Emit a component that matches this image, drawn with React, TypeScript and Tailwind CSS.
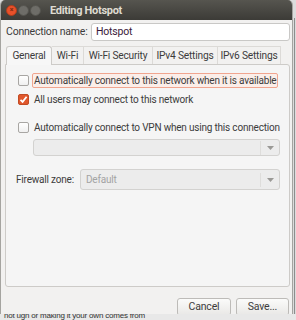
import React from 'react';

const font = { fontFamily: 'Roboto, "Liberation Sans", sans-serif' };

const Check = ({ checked }: { checked?: boolean }) =>
  checked ? (
    <div className="w-[11px] h-[11px] shrink-0 rounded-[2px] bg-[#e0572c] border border-[#c24b24] flex items-center justify-center">
      <svg width="9" height="9" viewBox="0 0 9 9">
        <path d="M1.5 4.8 L3.6 6.8 L7.6 1.8" stroke="white" strokeWidth="1.8" fill="none" />
      </svg>
    </div>
  ) : (
    <div className="w-[11px] h-[11px] shrink-0 rounded-[2px] bg-gradient-to-b from-white to-[#f0f0f0] border border-[#a8a6a3]" />
  );

const Arrow = () => (
  <div className="h-[14px] border-l border-[#dedddb] pl-[6px] pr-[5px] flex items-center">
    <svg width="7" height="4" viewBox="0 0 7 4">
      <path d="M0 0 L7 0 L3.5 4 Z" fill="#9a9996" />
    </svg>
  </div>
);

const Tab = ({ label, w }: { label: string; w: string }) => (
  <div className={`${w} border-t border-r border-[#dcdad7] flex items-center justify-center whitespace-nowrap`}>{label}</div>
);

export default function App() {
  return (
    <div className="w-[296px] h-[320px] bg-[#dcdcdc] overflow-hidden relative tracking-[-0.2px]" style={font}>
      <div className="absolute left-[294px] top-[18px] w-[1px] h-[302px] bg-[#8d8d8d]" />
      <div className="absolute left-0 top-[200px] w-[1px] h-[12px] bg-[#3b6fb0]" />
      <div className="absolute left-0 top-0 w-[293px] h-[314px] bg-[#f2f1f0] rounded-t-[5px] border-l border-r border-[#a5a4a0] flex flex-col overflow-hidden">
        {/* title bar */}
        <div className="h-[20px] bg-gradient-to-b from-[#56554f] to-[#3c3b37] flex items-center pl-[5px] shrink-0">
          <div className="w-[11px] h-[11px] rounded-full bg-[#e9512a] border border-[#b03d1d] flex items-center justify-center text-[7px] leading-none text-[#7a2a12] font-bold">×</div>
          <div className="w-[11px] h-[11px] rounded-full bg-[#6e6d68] border border-[#55544f] ml-[1px]" />
          <div className="w-[11px] h-[11px] rounded-full bg-[#6e6d68] border border-[#55544f] ml-[1px]" />
          <span className="ml-[9px] text-[11px] font-bold text-[#dfdbd2] leading-none whitespace-nowrap tracking-[-0.3px]">Editing Hotspot</span>
        </div>

        <div className="flex-1 flex flex-col pl-[4px] pr-[2px] text-[10px]">
          {/* connection name */}
          <div className="flex items-center mt-[3px] h-[18px]">
            <span className="text-[#3c3c3c] pl-[1px] w-[86px] whitespace-nowrap text-[10.5px]">Connection name:</span>
            <div className="flex-1 h-[18px] bg-white border border-[#c9c8c6] rounded-[3px] flex items-center pl-[4px] text-[10.5px] text-[#3a1a3a]">
              Hotspot
            </div>
          </div>

          {/* tabs */}
          <div className="flex mt-[5px] pl-[1px] text-[#3c3c3c] h-[18px] items-stretch text-[10.2px]">
            <div className="w-[46px] bg-[#f7f7f7] border border-b-0 border-[#cdcbc8] rounded-t-[3px] flex items-center justify-center relative z-10 h-[19px]">General</div>
            <Tab label="Wi-Fi" w="w-[32px]" />
            <Tab label="Wi-Fi Security" w="w-[69px]" />
            <Tab label="IPv4 Settings" w="w-[65px]" />
            <Tab label="IPv6 Settings" w="w-[63px]" />
          </div>

          {/* panel */}
          <div className="h-[223px] bg-[#f5f5f5] border border-[#cdcbc8] rounded-b-[3px] rounded-tr-[3px] flex flex-col text-[#3c3c3c] pr-[9px]">
            <div className="flex items-center mt-[8px] ml-[12px] h-[15px]">
              <Check />
              <span className="ml-[3px] px-[1px] border border-[#f0a58f] bg-[#fbeee9] rounded-[2px] leading-[13px] whitespace-nowrap">
                Automatically connect to this network when it is available
              </span>
            </div>
            <div className="flex items-center mt-[3px] ml-[12px] h-[16px]">
              <Check checked />
              <span className="ml-[5px] whitespace-nowrap">All users may connect to this network</span>
            </div>
            <div className="flex items-center mt-[12px] ml-[12px] h-[16px]">
              <Check />
              <span className="ml-[5px] whitespace-nowrap">Automatically connect to VPN when using this connection</span>
            </div>
            <div className="ml-[27px] mt-[4px] h-[17px] bg-[#ececec] border border-[#d3d2d0] rounded-[3px] flex items-center justify-end">
              <Arrow />
            </div>
            <div className="flex items-center mt-[13px] ml-[10px]">
              <span className="w-[64px] whitespace-nowrap">Firewall zone:</span>
              <div className="flex-1 h-[21px] bg-[#ececec] border border-[#d3d2d0] rounded-[3px] flex items-center justify-between pl-[5px] text-[#a3a3a3]">
                Default
                <Arrow />
              </div>
            </div>
          </div>

          {/* buttons */}
          <div className="flex justify-end gap-[5px] mt-[11px] pr-[1px] text-[10.5px]">
            <div className="w-[54px] h-[18px] border border-[#bdbbb8] rounded-[3px] bg-gradient-to-b from-[#fbfbfa] to-[#e9e8e6] flex items-center justify-center text-[#3c3c3c]">Cancel</div>
            <div className="w-[53px] h-[18px] border border-[#bdbbb8] rounded-[3px] bg-gradient-to-b from-[#fbfbfa] to-[#e9e8e6] flex items-center justify-center text-[#3c3c3c]">Save...</div>
          </div>
        </div>
      </div>
      <div className="absolute left-0 top-[314px] w-[296px] h-[6px] bg-[#e8e8e8] overflow-hidden">
        <div className="text-[8px] leading-[8px] text-[#333] -mt-[2px] ml-[4px] whitespace-nowrap" style={{ fontFamily: '"Liberation Sans", sans-serif' }}>
          not ugh or making it your own comes from
        </div>
      </div>
    </div>
  );
}
